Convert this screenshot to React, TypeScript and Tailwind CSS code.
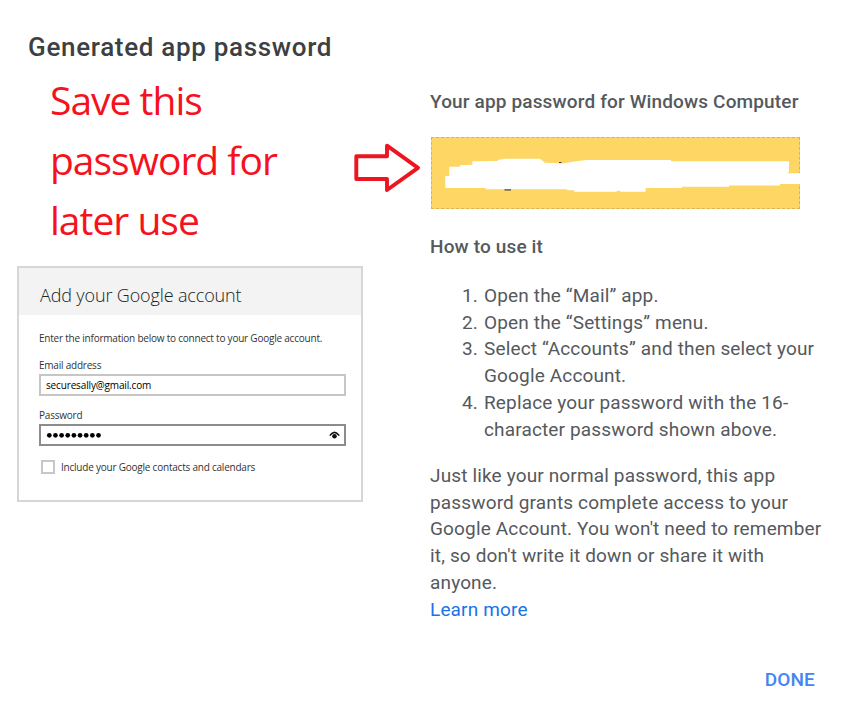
import React from "react";

const steps = [
  ["Open the “Mail” app."],
  ["Open the “Settings” menu."],
  ["Select “Accounts” and then select your", "Google Account."],
  ["Replace your password with the 16-", "character password shown above."],
];

const notice = [
  "Just like your normal password, this app",
  "password grants complete access to your",
  "Google Account. You won't need to remember",
  "it, so don't write it down or share it with",
  "anyone.",
];

function Arrow() {
  return (
    <svg className="mt-[61px] ml-[8px] h-[55px] w-[70px]" viewBox="0 0 70 55" fill="none">
      <path
        d="M3.3 16.3H34V5.7L65 27.8L34 50V39H3.3Z"
        stroke="#ed1620"
        strokeWidth="3.9"
        strokeLinejoin="round"
      />
    </svg>
  );
}

function PasswordBox() {
  return (
    <div className="relative mt-[21px] ml-px h-[72px] w-[369px] border border-dashed border-[#d8b456] bg-[#fdd663]">
      <svg className="absolute -top-px -left-px h-[72px] w-[369px]" viewBox="1 0 369 72">
        <path d="M74.5 52.7h6.5M129 26h2.5" stroke="#3c4043" strokeWidth="1.8" />
        <path
          fill="#fff"
          d="M19.3 29.7H30V28.3L42.3 27.7V24.3L67.7 24V23L75.3 21.7H110L115 25.7L134 26.3L145.7 24.3L156.7 23H241V24.3H359V35L356.3 36.3H370.5V47H350V48.5H299V49.7H252V51H215.7V54.7H191L188.3 53.4L186 54.7H144.3V53.3H137.3V52.3H55.7V51H15.3V39H19.3Z"
        />
      </svg>
    </div>
  );
}

function AccountCard() {
  return (
    <section className="mt-[14px] ml-[17px] h-[236px] w-[346px] border-2 border-[#d6d6d6] bg-white font-['Open_Sans',sans-serif] text-[#333]">
      <header className="flex h-[47px] items-center bg-[#f3f3f3] pt-[7px] pl-[21px]">
        <h2 className="text-[18px] leading-6 font-light tracking-[-0.14px] whitespace-nowrap text-[#222]">
          Add your Google account
        </h2>
      </header>
      <div className="pt-[16px] pl-[20px] text-[10px] leading-[14px] tracking-[-0.22px] whitespace-nowrap">
        <p>Enter the information below to connect to your Google account.</p>
        <p className="mt-[13px]">Email address</p>
        <div className="mt-[2px] flex h-[22px] w-[307px] items-center border-2 border-[#c6c6c6] pl-[5px] tracking-[-0.15px] text-black">
          securesally@gmail.com
        </div>
        <p className="mt-[12px]">Password</p>
        <div className="mt-[2px] flex h-[22px] w-[307px] items-center justify-between border-2 border-[#8c8c8c] pr-[4px] pl-[5px]">
          <svg className="h-[6px] w-[58px]" viewBox="0 0 58 6">
            {Array.from({ length: 9 }, (_, i) => (
              <circle key={i} cx={3.3 + i * 6.15} cy={3.3} r={2.35} fill="#000" />
            ))}
          </svg>
          <svg className="h-[8px] w-[11px]" viewBox="0 0 11 8" fill="none">
            <path d="M.8 4.6Q5.5-1.8 10.2 4.6" stroke="#111" strokeWidth="1.6" />
            <circle cx="5.5" cy="5.2" r="2.3" fill="#111" />
          </svg>
        </div>
        <div className="mt-[14px] ml-[2px] flex items-center gap-[6px]">
          <span className="size-[14px] border-2 border-[#c8c8c8]" />
          <span>Include your Google contacts and calendars</span>
        </div>
      </div>
    </section>
  );
}

export default function App() {
  return (
    <main className="h-[725px] w-[864px] overflow-hidden bg-white font-['Roboto',sans-serif] text-[19px] leading-[26.85px] tracking-[0.15px] text-[#55595d]">
      <h1 className="pt-[31px] pl-[28px] text-[26px] leading-[32px] font-medium tracking-[0.68px] text-[#3c4043]">
        Generated app password
      </h1>
      <div className="flex pt-[16px]">
        <div className="w-[345px] shrink-0">
          <p className="-mt-[9px] mb-[16px] pl-[50px] font-['Open_Sans',sans-serif] text-[39px] leading-[60px] font-medium tracking-[-1px] whitespace-nowrap text-[#f5121d]">
            Save this
            <br />
            password for
            <br />
            later use
          </p>
          <AccountCard />
        </div>
        <div className="w-[85px] shrink-0">
          <Arrow />
        </div>
        <div className="w-[434px] whitespace-nowrap">
          <h3 className="mt-[10px] font-medium">Your app password for Windows Computer</h3>
          <PasswordBox />
          <h3 className="mt-[25px] font-medium">How to use it</h3>
          <ol className="mt-[22px]">
            {steps.map((lines, i) => (
              <li key={i} className="flex">
                <span className="w-[54px] pr-[6px] text-right">{i + 1}.</span>
                <span className="flex flex-col">
                  {lines.map((line) => (
                    <span key={line}>{line}</span>
                  ))}
                </span>
              </li>
            ))}
          </ol>
          <div className="mt-[19px]">
            {notice.map((line) => (
              <p key={line}>{line}</p>
            ))}
            <a className="text-[#1a73e8]">Learn more</a>
          </div>
          <div className="mt-[43px] flex justify-end pr-[49px]">
            <button className="font-medium text-[#4285f4]">DONE</button>
          </div>
        </div>
      </div>
    </main>
  );
}
